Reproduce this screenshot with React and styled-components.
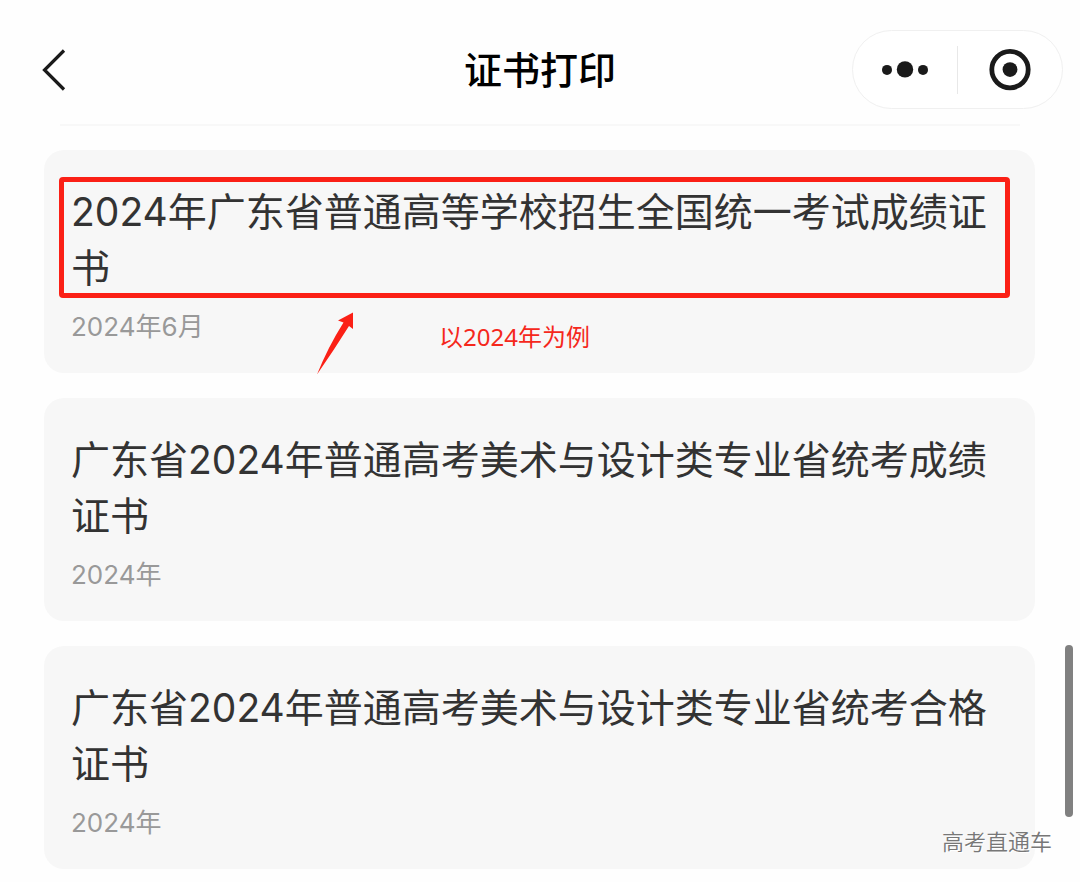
import React from 'react';
import styled, { createGlobalStyle } from 'styled-components';

const GlobalStyle = createGlobalStyle`
  * {
    box-sizing: border-box;
  }

  body {
    margin: 0;
    background: #fefefe;
    font-family: Inter, "Noto Sans CJK SC", sans-serif;
  }
`;

const Page = styled.div`
  position: relative;
  min-height: 100vh;
  overflow: hidden;
`;

const Header = styled.header`
  display: grid;
  grid-template-columns: 1fr auto 1fr;
  align-items: center;
  padding: 30px 17px 15px;
`;

const IconButton = styled.button`
  display: flex;
  align-items: center;
  justify-content: center;
  padding: 0;
  border: none;
  background: none;
  color: #1a1a1a;
  cursor: pointer;
`;

const BackButton = styled(IconButton)`
  width: 74px;
  height: 56px;
`;

const PageTitle = styled.h1`
  margin: 0;
  font-size: 38px;
  line-height: 56px;
  font-weight: 500;
  color: #000;
`;

const Capsule = styled.div`
  display: flex;
  align-items: center;
  justify-self: end;
  height: 79px;
  border: 1px solid #f0f0f0;
  border-radius: 40px;
  background: #fff;
`;

const CapsuleButton = styled(IconButton)`
  width: 104px;
  height: 48px;

  & + & {
    width: 105px;
    border-left: 1px solid #e8e8e8;
  }
`;

const Rule = styled.hr`
  height: 2px;
  margin: 0 60px;
  border: none;
  background: #f8f8f8;
`;

const List = styled.main`
  display: flex;
  flex-direction: column;
  gap: 25px;
  padding: 24px 45px 13px 44px;
`;

const Card = styled.a`
  position: relative;
  display: block;
  padding: 34px 27px 28px;
  border-radius: 20px;
  background: #f7f7f7;
  text-decoration: none;
`;

const CardTitle = styled.h2`
  position: relative;
  margin: 0 0 13px;
  font-size: 39px;
  line-height: 56px;
  font-weight: 380;
  color: #333;
`;

const CardDate = styled.p`
  margin: 0;
  font-size: 26px;
  line-height: 36px;
  font-weight: 380;
  color: #999;
`;

const Highlight = styled.span`
  position: absolute;
  inset: -7px -2px -2px -12px;
  border: 5px solid #fb2016;
  border-radius: 4px;
`;

const Arrow = styled.svg`
  position: absolute;
  left: 272px;
  top: 162px;
`;

const Note = styled.span`
  position: absolute;
  left: 395px;
  top: 169px;
  font-family: "Noto Sans", "Noto Sans CJK SC", sans-serif;
  font-size: 24px;
  line-height: 36px;
  color: #f5281c;
`;

const ScrollThumb = styled.div`
  position: absolute;
  top: 645px;
  right: 7px;
  width: 8px;
  height: 172px;
  border-radius: 4px;
  background: #808080;
`;

const Watermark = styled.span`
  position: absolute;
  right: 28px;
  top: 824px;
  font-size: 22px;
  line-height: 36px;
  font-weight: 350;
  color: #777;
  text-shadow: 1px 1px 0 #fff;
`;

const certificates = [
  { title: '2024年广东省普通高等学校招生全国统一考试成绩证书', date: '2024年6月', note: '以2024年为例' },
  { title: '广东省2024年普通高考美术与设计类专业省统考成绩证书', date: '2024年' },
  { title: '广东省2024年普通高考美术与设计类专业省统考合格证书', date: '2024年' },
];

function Certificate({ title, date, note }) {
  return (
    <Card href="#">
      <CardTitle>
        {title}
        {note && <Highlight />}
      </CardTitle>
      <CardDate>{date}</CardDate>
      {note && (
        <>
          <Arrow width="40" height="64" viewBox="0 0 40 64" aria-hidden="true">
            <path d="M37 0.5 L22 8.5 L27.5 10.5 Q12 35 1 62.5 Q18 38 33 14 L37 17 Z" fill="#fb2016" />
          </Arrow>
          <Note>{note}</Note>
        </>
      )}
    </Card>
  );
}

function App() {
  return (
    <Page>
      <GlobalStyle />
      <Header>
        <BackButton aria-label="返回">
          <svg width="24" height="42" viewBox="0 0 24 42" fill="none" stroke="currentColor" strokeWidth="3.2">
            <path d="M22 1.5 L2.5 21 L22 40.5" />
          </svg>
        </BackButton>
        <PageTitle>证书打印</PageTitle>
        <Capsule>
          <CapsuleButton aria-label="更多">
            <svg width="48" height="18" viewBox="0 0 48 18" fill="currentColor">
              <circle cx="6" cy="8.9" r="5" />
              <circle cx="24" cy="8.4" r="8.2" />
              <circle cx="42" cy="8.9" r="5" />
            </svg>
          </CapsuleButton>
          <CapsuleButton aria-label="关闭">
            <svg width="42" height="42" viewBox="0 0 42 42">
              <circle cx="21" cy="20.6" r="18.2" fill="none" stroke="currentColor" strokeWidth="4.8" />
              <circle cx="21" cy="20.6" r="7.4" fill="currentColor" />
            </svg>
          </CapsuleButton>
        </Capsule>
      </Header>
      <Rule />
      <List>
        {certificates.map((item) => (
          <Certificate key={item.title} {...item} />
        ))}
      </List>
      <ScrollThumb />
      <Watermark>高考直通车</Watermark>
    </Page>
  );
}

export default App;
